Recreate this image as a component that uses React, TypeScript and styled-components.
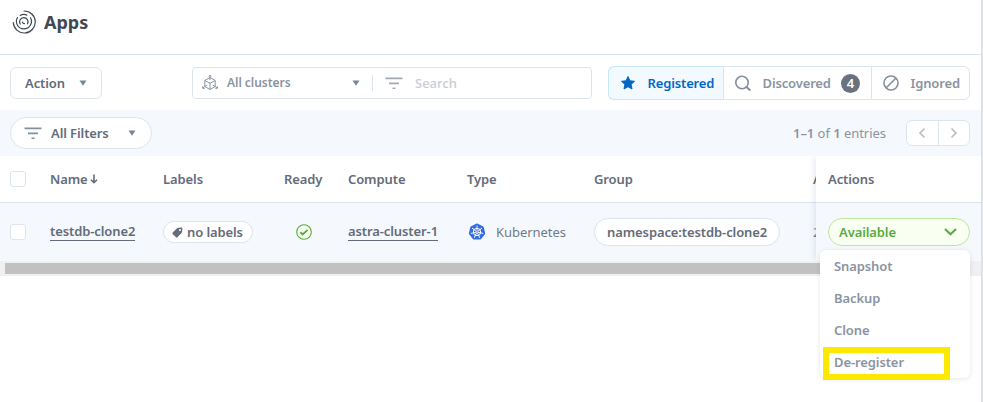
import React from "react";
import styled, { createGlobalStyle, css } from "styled-components";

const color = {
  line: "#dce5ee",
  tint: "#f5f9fd",
  ink: "#646b79",
  mute: "#8b93a1",
  dark: "#404854",
  blue: "#0067c5",
  green: "#56ab41",
};

const GlobalStyle = createGlobalStyle`
  * { box-sizing: border-box; }
  body {
    margin: 0;
    overflow: hidden;
    background: #fff;
    font-family: "Noto Sans", "Open Sans", sans-serif;
    font-size: 13px;
    line-height: 18px;
    color: ${color.ink};
  }
  svg { display: block; flex: none; }
`;

const strong = css`
  font-weight: 600;
  letter-spacing: -0.1px;
`;

const Page = styled.div`
  position: relative;
  width: 983px;
  height: 402px;
  border-right: 2px solid #dee1e6;
  overflow: hidden;
`;

const Header = styled.header`
  display: flex;
  align-items: center;
  gap: 8px;
  height: 55px;
  padding: 0 12px 11px;
  border-bottom: 1px solid ${color.line};
`;

const Title = styled.h1`
  margin: 0;
  font-size: 18px;
  line-height: 24px;
  font-weight: 700;
  color: ${color.dark};
`;

const Toolbar = styled.div`
  display: flex;
  align-items: center;
  height: 55px;
  padding: 1px 11px 0 10px;
`;

const box = css`
  display: flex;
  align-items: center;
  height: 32px;
  border: 1px solid ${color.line};
  background: #fff;
  ${strong}
`;

const ActionButton = styled.div`
  ${box}
  width: 92px;
  border-radius: 6px;
  justify-content: space-between;
  padding: 0 14px;
`;

const SearchBox = styled.div`
  ${box}
  width: 400px;
  margin-left: 90px;
  border-radius: 4px;
  color: ${color.mute};
`;

const ClusterSelect = styled.div`
  display: flex;
  align-items: center;
  width: 180px;
  height: 16px;
  padding: 0 12px 0 9px;
  border-right: 1px solid ${color.line};
`;

const ClusterLabel = styled.span`
  flex: 1;
  margin-left: 9px;
  font-size: 12px;
  letter-spacing: -0.04px;
`;

const SearchField = styled.div`
  display: flex;
  align-items: center;
  gap: 12px;
  padding-left: 12px;
  color: #c9cdd3;
  font-weight: 500;
  letter-spacing: normal;
`;

const Tabs = styled.div`
  display: flex;
  margin-left: 16px;
`;

const Tab = styled.div<{ $w: number; $active?: boolean }>`
  ${box}
  width: ${(p) => p.$w}px;
  height: 34px;
  padding-left: 11px;
  color: ${(p) => (p.$active ? color.blue : color.mute)};
  background: ${(p) => (p.$active ? "#f2faff" : "#fff")};
  border-color: ${(p) => (p.$active ? "#c6e6fb" : color.line)};
  letter-spacing: -0.14px;
  border-right-width: 0;
  &:first-child { border-radius: 6px 0 0 6px; }
  &:last-child { border-radius: 0 6px 6px 0; border-right-width: 1px; }
`;

const TabText = styled.span`
  margin-left: 11.5px;
`;

const Count = styled.span`
  width: 19px;
  height: 19px;
  margin-left: 10px;
  border-radius: 50%;
  background: #6a7280;
  color: #fff;
  text-align: center;
  line-height: 19px;
`;

const FilterBar = styled.div`
  display: flex;
  align-items: center;
  height: 46px;
  padding: 0 11px 0 10px;
  background: ${color.tint};
`;

const FilterButton = styled.div`
  ${box}
  width: 142px;
  border-radius: 16px;
  padding: 0 15px 0 13px;
`;

const FilterText = styled.span`
  flex: 1;
  margin-left: 9px;
`;

const Entries = styled.div`
  margin: 0 20px 0 auto;
  color: ${color.mute};
  letter-spacing: -0.04px;
  b { font-weight: 600; }
`;

const Pager = styled.div`
  ${box}
  width: 64px;
  height: 26px;
  border-radius: 6px;
`;

const PagerCell = styled.div`
  display: flex;
  flex: 1;
  height: 100%;
  align-items: center;
  justify-content: center;
  & + & { border-left: 1px solid ${color.line}; }
`;

const Table = styled.div`
  display: flex;
`;

const Scroller = styled.div`
  width: 816px;
  overflow: hidden;
`;

const HeadRow = styled.div`
  display: grid;
  grid-template-columns: 40px 113px 121px 64px 119px 127px 219px 100px;
  align-items: center;
  height: 47px;
  padding-left: 10px;
  border-bottom: 1px solid ${color.line};
  ${strong}
`;

const BodyRow = styled(HeadRow)`
  height: 58px;
  border: 0;
  background: ${color.tint};
`;

const Cell = styled.div<{ $indent?: number; $gap?: number }>`
  display: flex;
  align-items: center;
  gap: ${(p) => p.$gap ?? 0}px;
  padding-left: ${(p) => p.$indent ?? 0}px;
  white-space: nowrap;
`;

const PlainText = styled.span`
  font-weight: 400;
  letter-spacing: -0.04px;
  color: #727986;
`;

const Check = styled.span`
  width: 16px;
  height: 16px;
  border: 1px solid ${color.line};
  border-radius: 3px;
  background: #fff;
`;

const Link = styled.a`
  height: 19px;
  margin-top: -1px;
  border-bottom: 1px solid ${color.ink};
`;

const Chip = styled.span<{ $h: number; $pad: string }>`
  display: flex;
  align-items: center;
  gap: 4px;
  height: ${(p) => p.$h}px;
  padding: ${(p) => p.$pad};
  border: 1px solid ${color.line};
  border-radius: 14px;
  background: #fff;
`;

const ActionsColumn = styled.div`
  position: relative;
  width: 165px;
  box-shadow: -2px 0 6px rgba(70, 80, 180, 0.12);
  clip-path: inset(0 0 0 -10px);
`;

const ActionsHead = styled.div`
  display: flex;
  align-items: center;
  height: 47px;
  padding-left: 12px;
  border-bottom: 1px solid ${color.line};
  background: #fff;
  ${strong}
`;

const ActionsCell = styled.div`
  display: flex;
  align-items: center;
  height: 58px;
  padding: 0 11px 0 12px;
  background: ${color.tint};
`;

const Status = styled.div`
  display: flex;
  align-items: center;
  justify-content: space-between;
  width: 142px;
  height: 28px;
  padding: 0 12px 0 10px;
  border: 1px solid #bfe69b;
  border-radius: 14px;
  background: #f9fff1;
  color: ${color.green};
  ${strong}
`;

const ScrollTrack = styled.div`
  height: 15px;
  padding: 2px 5px;
  background: #f0f0f0;
`;

const ScrollThumb = styled.div`
  width: 860px;
  height: 11px;
  background: #c1c1c1;
`;

const Menu = styled.div`
  position: absolute;
  top: 250px;
  left: 820px;
  width: 150px;
  height: 128px;
  border-radius: 6px;
  background: #fff;
  box-shadow: 0 1px 5px rgba(60, 70, 90, 0.14);
`;

const MenuItem = styled.div`
  height: 32px;
  padding-left: 14px;
  line-height: 32px;
  color: ${color.mute};
  ${strong}
`;

const Highlight = styled.div`
  position: absolute;
  left: 3px;
  top: 97px;
  width: 127px;
  height: 33px;
  border: 6px solid #fce803;
`;

const Caret = () => (
  <svg width="8" height="6" viewBox="0 0 8 6" fill="#7b8593">
    <path d="M.5 .5h7L4 5.8z" />
  </svg>
);

const FilterIcon = ({ tone = "#858e9c" }: { tone?: string }) => (
  <svg width="18" height="13" viewBox="0 0 18 13" fill={tone}>
    <path d="M.5 .5h17v1.7H.5zM4 5.5h10v1.7H4zM7.5 10.4h3v1.7h-3z" />
  </svg>
);

const Logo = () => (
  <svg width="24" height="24" viewBox="0 0 24 24" fill="none" stroke={color.dark} strokeWidth="1.2" strokeLinecap="round">
    <path d="M12 1A11 11 0 1 1 1.3 12.5" />
    <path d="M5.500 7.500A7.500 7.500 0 1 0 18.500 7.800" />
    <path d="M8.200 5.500A7.500 7.500 0 0 1 14.800 5.100" />
    <path d="M8.200 14A4.200 4.200 0 1 1 15.500 13.800" />
    <path d="M10.500 12.200A1.600 1.600 0 0 0 12.500 13.500" />
  </svg>
);

const ClusterIcon = () => (
  <svg width="16" height="18" viewBox="0 0 16 18" fill="none" stroke="#8b94a1" strokeWidth="1">
    <path d="M8 3.5l5.200 3v6L8 15.500l-5.200-3v-6zM2.800 6.500L8 9.300l5.200-2.800M8 9.300v6.200M8 1v5M2.800 12.500l2.500-1.400M13.200 12.500l-2.500-1.400" />
    <path d="M6.600 2.500L8 1.200l1.400 1.300M2.800 12.500L.8 14M.6 12.300V14.200l2 .4M13.200 12.500l2 1.500M15.400 12.300v1.900l-2 .4" />
  </svg>
);

const Star = () => (
  <svg width="16" height="16" viewBox="0 0 16 16" fill={color.blue} stroke={color.blue} strokeLinejoin="round">
    <path d="M8 1.5l1.9 4.3 4.6.5-3.4 3.1.9 4.6L8 11.7 4 14l.9-4.6L1.5 6.3l4.6-.5z" />
  </svg>
);

const SearchIcon = () => (
  <svg width="16" height="17" viewBox="0 0 16 17" fill="none" stroke="#858e9c" strokeWidth="1.6" strokeLinecap="round">
    <circle cx="7" cy="7.5" r="6.2" />
    <path d="M11.8 12.2l3 2.7" strokeWidth="2" />
  </svg>
);

const IgnoredIcon = () => (
  <svg width="16" height="16" viewBox="0 0 16 16" fill="none" stroke="#858e9c" strokeWidth="1.6">
    <circle cx="8" cy="8" r="7" />
    <path d="M3 13L13 3" />
  </svg>
);

const Chevron = ({ d }: { d: string }) => (
  <svg width="8" height="12" viewBox="0 0 8 12" fill="none" stroke="#b9bec5" strokeWidth="1.7">
    <path d={d} />
  </svg>
);

const SortArrow = () => (
  <svg width="8" height="10" viewBox="0 0 8 10" fill="none" stroke={color.ink} strokeWidth="1.6">
    <path d="M4 .5v8M1 5.7l3 3 3-3" />
  </svg>
);

const Tag = () => (
  <svg width="11" height="11" viewBox="0 0 11 11" fill={color.ink}>
    <path fillRule="evenodd" d="M5.4 1L9 .4Q10.6.2 10.4 1.8L10 5.4 5.4 10.3Q4.7 11 4 10.3L.7 7Q0 6.3 .7 5.6zM8 1.9a1 1 0 1 0 .01 0z" />
  </svg>
);

const ReadyIcon = () => (
  <svg width="16" height="16" viewBox="0 0 16 16" fill="none" stroke={color.green}>
    <circle cx="8" cy="8" r="7.3" fill="#f8fff0" strokeWidth="1.1" />
    <path d="M4.4 8.2l2.3 2.2 4.9-4.5" strokeWidth="1.9" />
  </svg>
);

const KubernetesIcon = () => (
  <svg width="18" height="18" viewBox="0 0 18 18">
    <path
      d="M9 1.3l5.9 2.9 1.5 6.4-4.1 5.1H5.7L1.6 10.6l1.5-6.4z"
      fill="#326ce5"
      stroke="#326ce5"
      strokeWidth="1.6"
      strokeLinejoin="round"
    />
    <g fill="none" stroke="#fff">
      <circle cx="9" cy="9" r="3.7" strokeWidth="1" />
      {[0, 1, 2, 3, 4, 5, 6].map((i) => (
        <path key={i} d="M9 8.3V2.6" strokeWidth=".9" transform={`rotate(${(i * 360) / 7} 9 9)`} />
      ))}
    </g>
  </svg>
);

export default function App() {
  return (
    <Page>
      <GlobalStyle />
      <Header>
        <Logo />
        <Title>Apps</Title>
      </Header>
      <Toolbar>
        <ActionButton>
          Action
          <Caret />
        </ActionButton>
        <SearchBox>
          <ClusterSelect>
            <ClusterIcon />
            <ClusterLabel>All clusters</ClusterLabel>
            <Caret />
          </ClusterSelect>
          <SearchField>
            <FilterIcon tone="#a3a9b2" />
            Search
          </SearchField>
        </SearchBox>
        <Tabs>
          <Tab $w={115} $active>
            <Star />
            <TabText>Registered</TabText>
          </Tab>
          <Tab $w={148}>
            <SearchIcon />
            <TabText>Discovered</TabText>
            <Count>4</Count>
          </Tab>
          <Tab $w={99}>
            <IgnoredIcon />
            <TabText>Ignored</TabText>
          </Tab>
        </Tabs>
      </Toolbar>
      <FilterBar>
        <FilterButton>
          <FilterIcon />
          <FilterText>All Filters</FilterText>
          <Caret />
        </FilterButton>
        <Entries>
          <b>1–1</b> of <b>1</b> entries
        </Entries>
        <Pager>
          <PagerCell><Chevron d="M6.5 1.5L2 6l4.5 4.5" /></PagerCell>
          <PagerCell><Chevron d="M1.5 1.5L6 6l-4.5 4.5" /></PagerCell>
        </Pager>
      </FilterBar>
      <Table>
        <Scroller>
          <HeadRow>
            <Cell><Check /></Cell>
            <Cell $gap={2}>Name<SortArrow /></Cell>
            <Cell>Labels</Cell>
            <Cell>Ready</Cell>
            <Cell>Compute</Cell>
            <Cell>Type</Cell>
            <Cell>Group</Cell>
            <Cell>A</Cell>
          </HeadRow>
          <BodyRow>
            <Cell><Check /></Cell>
            <Cell><Link>testdb-clone2</Link></Cell>
            <Cell><Chip $h={22} $pad="0 9px 0 8px"><Tag />no labels</Chip></Cell>
            <Cell $indent={12}><ReadyIcon /></Cell>
            <Cell><Link>astra-cluster-1</Link></Cell>
            <Cell $gap={10} $indent={1}>
              <KubernetesIcon />
              <PlainText>Kubernetes</PlainText>
            </Cell>
            <Cell><Chip $h={28} $pad="0 12px">namespace:testdb-clone2</Chip></Cell>
            <Cell><PlainText>2</PlainText></Cell>
          </BodyRow>
        </Scroller>
        <ActionsColumn>
          <ActionsHead>Actions</ActionsHead>
          <ActionsCell>
            <Status>
              Available
              <svg width="13" height="8" viewBox="0 0 13 8" fill="none" stroke={color.green} strokeWidth="2">
                <path d="M1 1l5.5 5.3L12 1" />
              </svg>
            </Status>
          </ActionsCell>
        </ActionsColumn>
      </Table>
      <ScrollTrack>
        <ScrollThumb />
      </ScrollTrack>
      <Menu>
        <MenuItem>Snapshot</MenuItem>
        <MenuItem>Backup</MenuItem>
        <MenuItem>Clone</MenuItem>
        <MenuItem>De-register</MenuItem>
        <Highlight />
      </Menu>
    </Page>
  );
}
